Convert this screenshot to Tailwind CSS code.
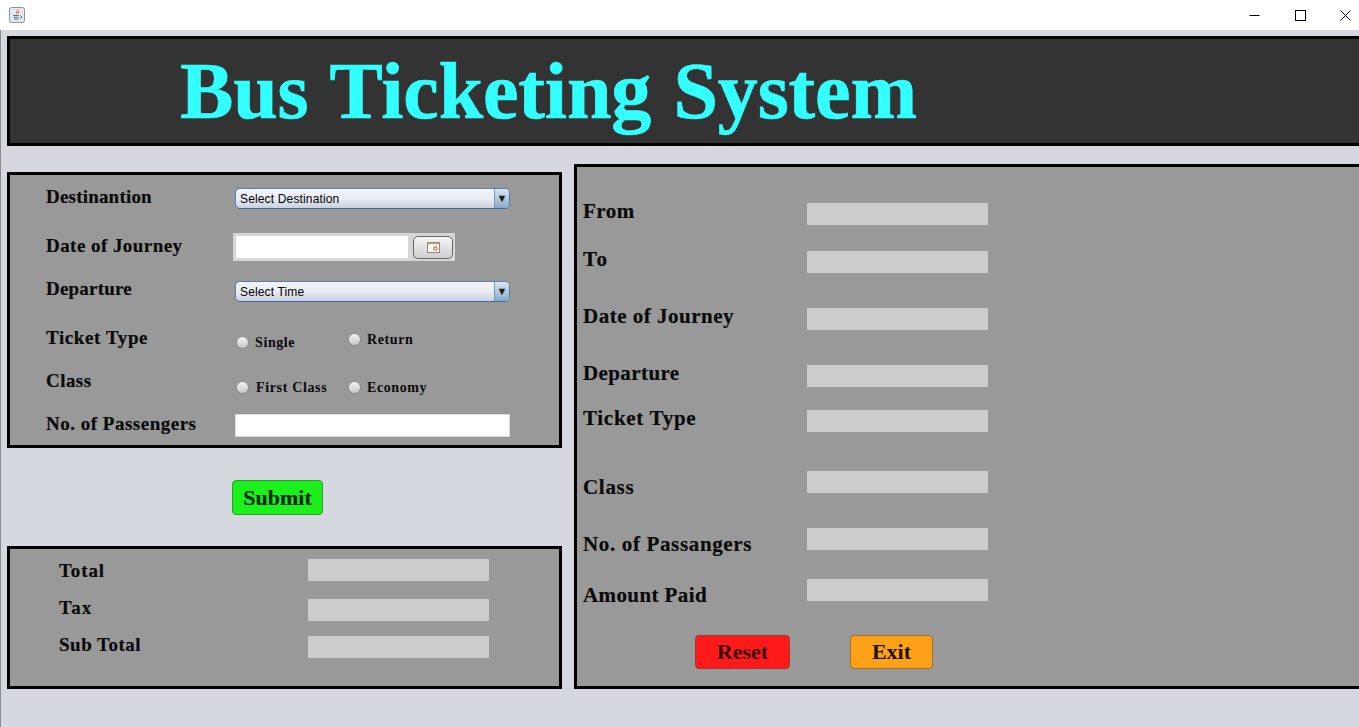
<!DOCTYPE html>
<html lang="en">
<head>
    <meta charset="UTF-8">
    <title>Bus Ticketing System</title>
    <script src="https://cdn.jsdelivr.net/npm/@tailwindcss/browser@4"></script>
</head>
<body class="w-[1359px] h-[727px] overflow-hidden bg-[#d5d8df] font-['Liberation_Serif',serif] text-[#0a0a0a]">
    <!-- title bar -->
    <div class="h-[30px] bg-white flex items-center justify-between">
        <svg class="ml-[9px] mb-[1px]" width="16" height="16" viewBox="0 0 16 16">
            <rect x="0.5" y="0.5" width="15" height="15" rx="2" fill="#e4e9ee" stroke="#87919c"/>
            <path d="M8.500 2.500c1 1.500-2 2.500-1 4.500M10 4c.5 1-1.500 1.500-.7 3" fill="none" stroke="#e2703a" stroke-width="1.100"/>
            <path d="M4 8.500h6M4.500 10.300h5M5 12.100h4.500M11 8.500l2 1.500-2 1.500" fill="none" stroke="#4f7392" stroke-width="1"/>
        </svg>
        <div class="flex items-center">
            <svg class="mr-[35px]" width="11" height="11" viewBox="0 0 11 11"><path d="M0.500 5.500h10" stroke="#000" stroke-width="1"/></svg>
            <svg class="mr-[34px]" width="11" height="11" viewBox="0 0 11 11"><rect x="0.500" y="0.500" width="10" height="10" fill="none" stroke="#000" stroke-width="1"/></svg>
            <svg class="mr-[8px]" width="11" height="11" viewBox="0 0 11 11"><path d="M0.500 0.500l10 10M10.500 0.500l-10 10" stroke="#000" stroke-width="1"/></svg>
        </div>
    </div>

    <div class="h-[697px] pl-[6px] border-l border-[#8a8c90]">
        <!-- header -->
        <div class="pt-[6px]">
            <div class="h-[110px] w-[1360px] bg-[#333333] border-[3px] border-black pl-[170px] flex items-center">
                <h1 class="text-[80px] leading-none font-bold text-[#33ffff] tracking-[-0.15px] [word-spacing:2.5px] whitespace-nowrap [-webkit-text-stroke:0.7px_#33ffff]">Bus Ticketing System</h1>
            </div>
        </div>

        <div class="flex items-start mt-[18px]">
            <!-- left column -->
            <div class="w-[555px] shrink-0 pt-[8px]">
                <div class="h-[276px] bg-[#999999] border-[3px] border-black">
                    <div class="flex h-[47px]">
                        <div class="w-[225px] pl-[36px] mt-[10px] text-[19px] leading-[24px] font-bold tracking-[0.2px] [-webkit-text-stroke:0.2px_#0a0a0a]">Destinantion</div>
                        <div class="mt-[13px] w-[275px] h-[21px] rounded-[5px] border border-[#5b7fa6] border-b-[#3f6a95] bg-gradient-to-b from-[#f2f4f8] via-[#e9ecf3] to-[#c9d0de] flex justify-between overflow-hidden">
                            <span class="pl-[4px] font-['Liberation_Sans',sans-serif] text-[12px] tracking-[0.15px] leading-[20px] text-black">Select Destination</span>
                            <span class="w-[15px] border-l border-[#7a9abd] bg-gradient-to-b from-[#dbe6f2] to-[#8aa9c9] flex items-center justify-center text-[11px] text-[#1a1a1a]">▼</span>
                        </div>
                    </div>
                    <div class="flex h-[46px]">
                        <div class="w-[223px] pl-[36px] mt-[12px] text-[19px] leading-[24px] font-bold tracking-[0.45px] [-webkit-text-stroke:0.2px_#0a0a0a]">Date of Journey</div>
                        <div class="mt-[11px] w-[222px] h-[28px] bg-[#d6d6d6] flex items-center pl-[3px]">
                            <div class="w-[172px] h-[22px] bg-white"></div>
                            <div class="ml-[5px] w-[40px] h-[23px] rounded-[5px] border border-[#666666] bg-gradient-to-b from-[#f6f6f6] to-[#cfcfcf] flex items-center justify-center">
                                <svg width="13" height="11" viewBox="0 0 13 11">
                                    <rect x="0.500" y="0.500" width="12" height="10" fill="#f7f5f0" stroke="#8d8674"/>
                                    <path d="M1 1.500h11" stroke="#b8ab8c" stroke-width="1.500"/>
                                    <circle cx="8.500" cy="6.500" r="1.700" fill="none" stroke="#c0392b"/>
                                </svg>
                            </div>
                        </div>
                    </div>
                    <div class="flex h-[48px]">
                        <div class="w-[225px] pl-[36px] mt-[9px] text-[19px] leading-[24px] font-bold tracking-[0.2px] [-webkit-text-stroke:0.2px_#0a0a0a]">Departure</div>
                        <div class="mt-[13px] w-[275px] h-[21px] rounded-[5px] border border-[#5b7fa6] border-b-[#3f6a95] bg-gradient-to-b from-[#f2f4f8] via-[#e9ecf3] to-[#c9d0de] flex justify-between overflow-hidden">
                            <span class="pl-[4px] font-['Liberation_Sans',sans-serif] text-[12px] tracking-[0.15px] leading-[20px] text-black">Select Time</span>
                            <span class="w-[15px] border-l border-[#7a9abd] bg-gradient-to-b from-[#dbe6f2] to-[#8aa9c9] flex items-center justify-center text-[11px] text-[#1a1a1a]">▼</span>
                        </div>
                    </div>
                    <div class="flex h-[44px]">
                        <div class="w-[226px] pl-[36px] mt-[10px] text-[19px] leading-[24px] font-bold tracking-[0.6px] [-webkit-text-stroke:0.2px_#0a0a0a]">Ticket Type</div>
                        <div class="w-[112px] mt-[17px] h-[18px] flex items-center gap-[6px] text-[14px] font-bold tracking-[0.6px]">
                            <span class="w-[13px] h-[13px] rounded-full border border-[#8c8c8c] bg-gradient-to-b from-[#f4f4f4] to-[#c8c8c8]"></span>Single
                        </div>
                        <div class="mt-[14px] h-[18px] flex items-center gap-[6px] text-[14px] font-bold tracking-[0.6px]">
                            <span class="w-[13px] h-[13px] rounded-full border border-[#8c8c8c] bg-gradient-to-b from-[#f4f4f4] to-[#c8c8c8]"></span>Return
                        </div>
                    </div>
                    <div class="flex h-[45px]">
                        <div class="w-[226px] pl-[36px] mt-[9px] text-[19px] leading-[24px] font-bold tracking-[0.45px] [-webkit-text-stroke:0.2px_#0a0a0a]">Class</div>
                        <div class="w-[112px] mt-[18px] h-[18px] flex items-center gap-[7px] text-[14px] font-bold tracking-[0.65px]">
                            <span class="w-[13px] h-[13px] rounded-full border border-[#8c8c8c] bg-gradient-to-b from-[#f4f4f4] to-[#c8c8c8]"></span>First Class
                        </div>
                        <div class="mt-[18px] h-[18px] flex items-center gap-[6px] text-[14px] font-bold tracking-[0.6px]">
                            <span class="w-[13px] h-[13px] rounded-full border border-[#8c8c8c] bg-gradient-to-b from-[#f4f4f4] to-[#c8c8c8]"></span>Economy
                        </div>
                    </div>
                    <div class="flex h-[40px]">
                        <div class="w-[225px] pl-[36px] mt-[7px] text-[19px] leading-[24px] font-bold tracking-[0.5px] [-webkit-text-stroke:0.2px_#0a0a0a]">No. of Passengers</div>
                        <div class="mt-[9px] w-[275px] h-[23px] bg-white border border-[#d8d8d8]"></div>
                    </div>
                </div>

                <div class="pl-[225px] mt-[32px]">
                    <button class="w-[91px] h-[35px] rounded-[4px] border border-[#2f9b2f] bg-[#1cf01c] text-[22px] font-bold leading-none text-[#0b2a0b] [-webkit-text-stroke:0.2px_#0b2a0b]">Submit</button>
                </div>

                <div class="mt-[31px] h-[143px] bg-[#999999] border-[3px] border-black">
                    <div class="flex h-[40px]">
                        <div class="w-[298px] pl-[49px] mt-[10px] text-[19px] leading-[24px] font-bold tracking-[0.9px] [-webkit-text-stroke:0.2px_#0a0a0a]">Total</div>
                        <div class="mt-[10px] w-[181px] h-[22px] bg-[#cccccc]"></div>
                    </div>
                    <div class="flex h-[37px]">
                        <div class="w-[298px] pl-[49px] mt-[7px] text-[19px] leading-[24px] font-bold tracking-[1.2px] [-webkit-text-stroke:0.2px_#0a0a0a]">Tax</div>
                        <div class="mt-[10px] w-[181px] h-[22px] bg-[#cccccc]"></div>
                    </div>
                    <div class="flex h-[37px]">
                        <div class="w-[298px] pl-[49px] mt-[7px] text-[19px] leading-[24px] font-bold tracking-[0.5px] [-webkit-text-stroke:0.2px_#0a0a0a]">Sub Total</div>
                        <div class="mt-[10px] w-[181px] h-[22px] bg-[#cccccc]"></div>
                    </div>
                </div>
            </div>

            <!-- right panel -->
            <div class="ml-[12px] w-[800px] shrink-0 h-[525px] bg-[#999999] border-[3px] border-black pl-[6px] pt-[36px]">
                <div class="flex h-[48px]"><div class="w-[224px] mt-[-5px] text-[21px] leading-[26px] font-bold tracking-[0.5px] [-webkit-text-stroke:0.2px_#0a0a0a]">From</div><div class="w-[181px] h-[22px] bg-[#cccccc]"></div></div>
                <div class="flex h-[57px]"><div class="w-[224px] mt-[-5px] text-[21px] leading-[26px] font-bold tracking-[1.5px] [-webkit-text-stroke:0.2px_#0a0a0a]">To</div><div class="w-[181px] h-[22px] bg-[#cccccc]"></div></div>
                <div class="flex h-[57px]"><div class="w-[224px] mt-[-5px] text-[21px] leading-[26px] font-bold tracking-[0.5px] [-webkit-text-stroke:0.2px_#0a0a0a]">Date of Journey</div><div class="w-[181px] h-[22px] bg-[#cccccc]"></div></div>
                <div class="flex h-[45px]"><div class="w-[224px] mt-[-5px] text-[21px] leading-[26px] font-bold tracking-[0.4px] [-webkit-text-stroke:0.2px_#0a0a0a]">Departure</div><div class="w-[181px] h-[22px] bg-[#cccccc]"></div></div>
                <div class="flex h-[61px]"><div class="w-[224px] mt-[-5px] text-[21px] leading-[26px] font-bold tracking-[0.7px] [-webkit-text-stroke:0.2px_#0a0a0a]">Ticket Type</div><div class="w-[181px] h-[22px] bg-[#cccccc]"></div></div>
                <div class="flex h-[57px]"><div class="w-[224px] mt-[3px] text-[21px] leading-[26px] font-bold tracking-[0.7px] [-webkit-text-stroke:0.2px_#0a0a0a]">Class</div><div class="w-[181px] h-[22px] bg-[#cccccc]"></div></div>
                <div class="flex h-[51px]"><div class="w-[224px] mt-[3px] text-[21px] leading-[26px] font-bold tracking-[0.65px] [-webkit-text-stroke:0.2px_#0a0a0a]">No. of Passangers</div><div class="w-[181px] h-[22px] bg-[#cccccc]"></div></div>
                <div class="flex h-[56px]"><div class="w-[224px] mt-[3px] text-[21px] leading-[26px] font-bold tracking-[0.4px] [-webkit-text-stroke:0.2px_#0a0a0a]">Amount Paid</div><div class="w-[181px] h-[22px] bg-[#cccccc]"></div></div>
                <div class="flex pl-[112px]">
                    <button class="w-[95px] h-[34px] rounded-[4px] border border-[#a83232] bg-[#ff1a1a] text-[22px] font-bold leading-none text-[#3a0505]">Reset</button>
                    <button class="ml-[60px] w-[83px] h-[34px] rounded-[4px] border border-[#9a7430] bg-[#ffa116] text-[22px] font-bold leading-none text-[#1e1204]">Exit</button>
                </div>
            </div>
        </div>
    </div>
</body>
</html>
